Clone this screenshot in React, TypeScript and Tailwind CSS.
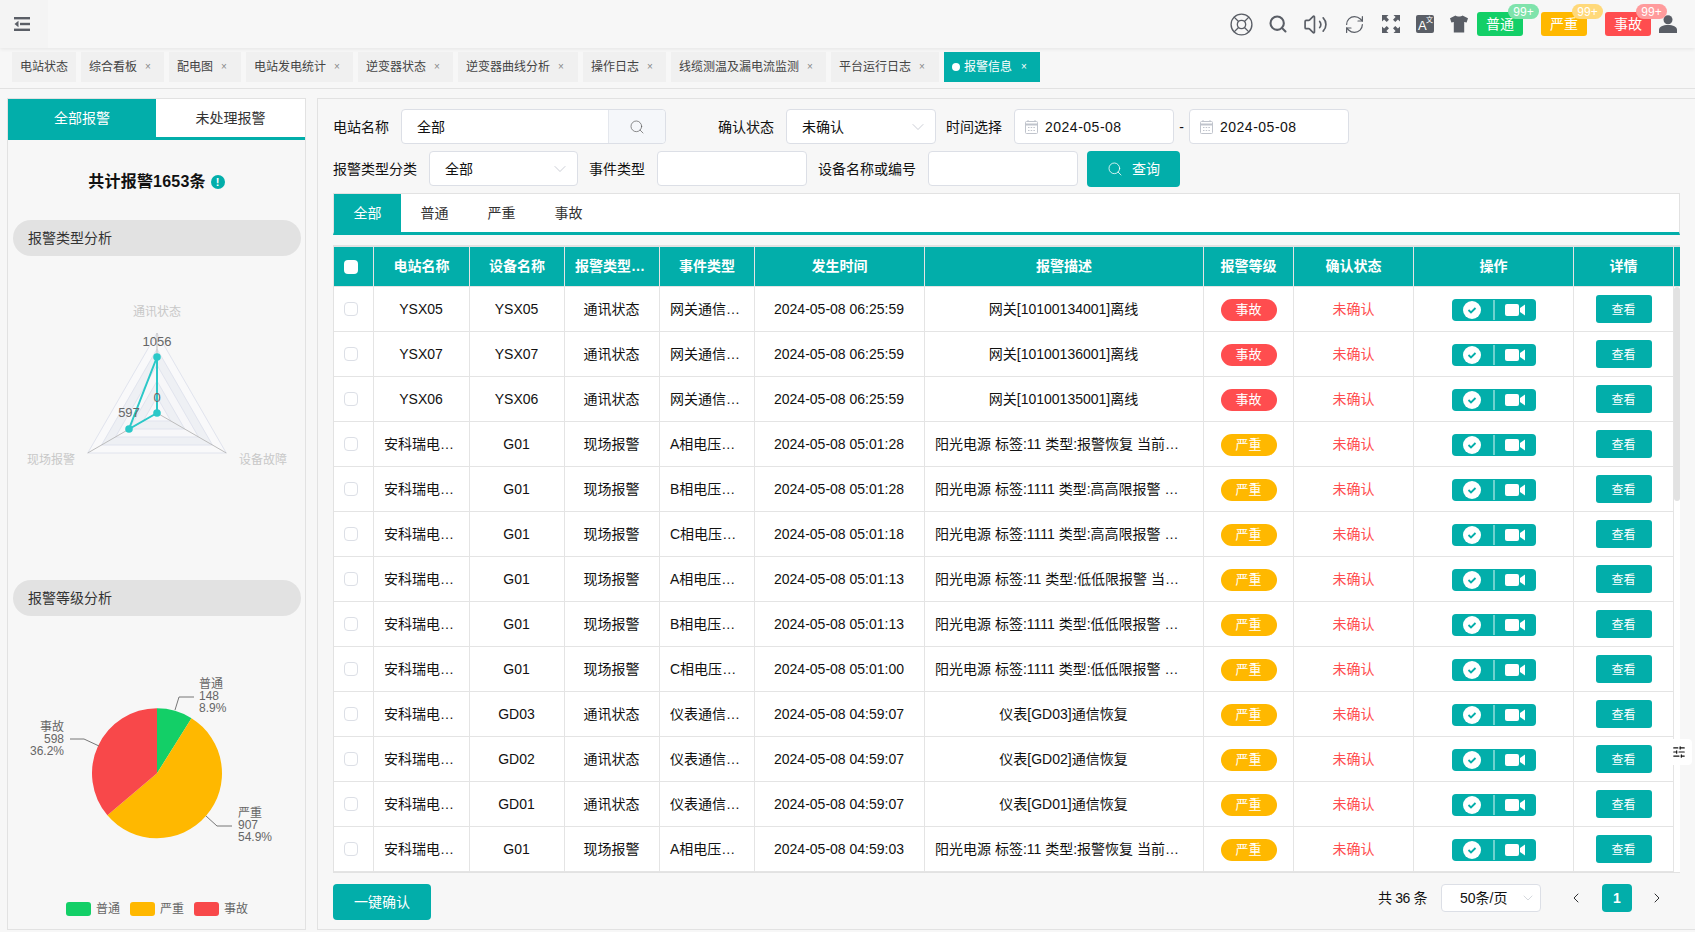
import { LifeBuoy, Search, Volume2, RefreshCw, ChevronDown, ChevronLeft, ChevronRight, SlidersHorizontal } from 'lucide-react';

const pageTabs = [
  { label: '电站状态', w: 'w-[64px]', close: false },
  { label: '综合看板', w: 'w-[83px]', close: true },
  { label: '配电图', w: 'w-[72px]', close: true },
  { label: '电站发电统计', w: 'w-[107px]', close: true },
  { label: '逆变器状态', w: 'w-[95px]', close: true },
  { label: '逆变器曲线分析', w: 'w-[120px]', close: true },
  { label: '操作日志', w: 'w-[83px]', close: true },
  { label: '线缆测温及漏电流监测', w: 'w-[155px]', close: true },
  { label: '平台运行日志', w: 'w-[108px]', close: true },
];

const rows = [
  ['YSX05', 'YSX05', '通讯状态', '网关通信中断', '2024-05-08 06:25:59', '网关[10100134001]离线', '事故'],
  ['YSX07', 'YSX07', '通讯状态', '网关通信中断', '2024-05-08 06:25:59', '网关[10100136001]离线', '事故'],
  ['YSX06', 'YSX06', '通讯状态', '网关通信中断', '2024-05-08 06:25:59', '网关[10100135001]离线', '事故'],
  ['安科瑞电气股份', 'G01', '现场报警', 'A相电压越限', '2024-05-08 05:01:28', '阳光电源 标签:11 类型:报警恢复 当前值:230.5', '严重'],
  ['安科瑞电气股份', 'G01', '现场报警', 'B相电压越限', '2024-05-08 05:01:28', '阳光电源 标签:1111 类型:高高限报警 当前值:265', '严重'],
  ['安科瑞电气股份', 'G01', '现场报警', 'C相电压越限', '2024-05-08 05:01:18', '阳光电源 标签:1111 类型:高高限报警 当前值:265', '严重'],
  ['安科瑞电气股份', 'G01', '现场报警', 'A相电压越限', '2024-05-08 05:01:13', '阳光电源 标签:11 类型:低低限报警 当前值:180', '严重'],
  ['安科瑞电气股份', 'G01', '现场报警', 'B相电压越限', '2024-05-08 05:01:13', '阳光电源 标签:1111 类型:低低限报警 当前值:180', '严重'],
  ['安科瑞电气股份', 'G01', '现场报警', 'C相电压越限', '2024-05-08 05:01:00', '阳光电源 标签:1111 类型:低低限报警 当前值:180', '严重'],
  ['安科瑞电气股份', 'GD03', '通讯状态', '仪表通信中断', '2024-05-08 04:59:07', '仪表[GD03]通信恢复', '严重'],
  ['安科瑞电气股份', 'GD02', '通讯状态', '仪表通信中断', '2024-05-08 04:59:07', '仪表[GD02]通信恢复', '严重'],
  ['安科瑞电气股份', 'GD01', '通讯状态', '仪表通信中断', '2024-05-08 04:59:07', '仪表[GD01]通信恢复', '严重'],
  ['安科瑞电气股份', 'G01', '现场报警', 'A相电压越限', '2024-05-08 04:59:03', '阳光电源 标签:11 类型:报警恢复 当前值:230.5', '严重'],
];

const headers = ['电站名称', '设备名称', '报警类型分类', '事件类型', '发生时间', '报警描述', '报警等级', '确认状态', '操作', '详情'];

function FoldIcon() {
  return (
    <svg width="16" height="14" viewBox="0 0 16 14" fill="#5a5e66">
      <rect x="0" y="0" width="16" height="2.4" />
      <rect x="6" y="5.8" width="10" height="2.4" />
      <rect x="0" y="11.6" width="16" height="2.4" />
      <path d="M4.5 3.8 L0.5 7 L4.5 10.2 Z" />
    </svg>
  );
}

function FullscreenIcon() {
  return (
    <svg width="18" height="18" viewBox="0 0 18 18" fill="#5a5e66">
      <path d="M0 0h6.5L4.4 2.1 7 4.7 4.7 7 2.1 4.4 0 6.5z" />
      <path d="M18 0v6.5l-2.1-2.1L13.3 7 11 4.7l2.6-2.6L11.500 0z" />
      <path d="M0 18v-6.500l2.100 2.100L4.700 11 7 13.300l-2.600 2.600 2.100 2.100z" />
      <path d="M18 18h-6.500l2.100-2.100L11 13.300 13.300 11l2.600 2.600 2.100-2.100z" />
    </svg>
  );
}

function TranslateIcon() {
  return (
    <div className="relative h-[18px] w-[18px] rounded-[2px] bg-[#5a5e66] text-white">
      <span className="absolute bottom-[1px] left-[2px] text-[13px] leading-none">A</span>
      <span className="absolute right-[1px] top-[1px] text-[7px] leading-none">文</span>
    </div>
  );
}

function ShirtIcon() {
  return (
    <svg width="18" height="18" viewBox="0 0 18 18" fill="#5a5e66">
      <path d="M5.500 0.500 C7 1.800 11 1.800 12.500 0.500 L18 3.200 L16.600 7.600 L14.200 7 L14.200 17.500 L3.800 17.500 L3.800 7 L1.400 7.600 L0 3.200 Z" />
    </svg>
  );
}

function UserIcon() {
  return (
    <svg width="18" height="18" viewBox="0 0 18 18" fill="#5a5e66">
      <circle cx="9" cy="4.800" r="4.500" />
      <path d="M0 18 V15 C0 11.500 4 10 9 10 C14 10 18 11.500 18 15 V18 Z" />
    </svg>
  );
}

function CheckIcon() {
  return (
    <svg width="18" height="18" viewBox="0 0 18 18">
      <circle cx="9" cy="9" r="9" fill="#fff" />
      <path d="M5.500 9 L8 11.500 L12.500 7" fill="none" stroke="#02aeaa" strokeWidth="1.800" />
    </svg>
  );
}

function CameraIcon() {
  return (
    <svg width="20" height="12" viewBox="0 0 20 12" fill="#fff">
      <rect x="0" y="0" width="14" height="12" rx="2" />
      <path d="M15 4 L20 0.500 V11.500 L15 8 Z" />
    </svg>
  );
}

function CalendarIcon() {
  return (
    <svg width="13" height="14" viewBox="0 0 13 14" fill="none" stroke="#c0c4cc" strokeWidth="1">
      <rect x="0.500" y="1.500" width="12" height="12" rx="1" />
      <path d="M0.500 4.500H12.500" strokeWidth="2" />
      <path d="M3 0V2M10 0V2" />
      <path d="M3 7.500H10M3 10.500H10" strokeDasharray="1.500 1.200" />
    </svg>
  );
}

function AlarmBadge({ label, color, soft }: { label: string; color: string; soft: string }) {
  return (
    <div className={`relative flex h-6 w-[46px] items-center justify-center rounded-[3px] text-sm text-white ${color}`}>
      {label}
      <span className={`absolute left-[31px] top-[-8px] flex h-[15px] w-[31px] items-center justify-center rounded-full text-xs text-white ${soft}`}>
        99+
      </span>
    </div>
  );
}

function RadarChart() {
  const cx = 157;
  const cy = 413;
  const ring = (r: number) =>
    `${cx},${cy - r} ${cx + r * 0.866},${cy + r / 2} ${cx - r * 0.866},${cy + r / 2}`;
  const fills = ['#f9f9fa', '#eef0f4', '#f7f7f9', '#eef0f4', '#f7f7f9'];
  return (
    <svg width="297" height="324" viewBox="8 256 297 324" className="block shrink-0">
      {[80, 64, 48, 32, 16].map((r, i) => (
        <polygon key={r} points={ring(r)} fill={fills[i]} stroke="#e1e4ee" strokeWidth="1" />
      ))}
      <path d="M157 413V333M157 413L87.700 453M157 413L226.300 453" stroke="#bdbdbd" strokeWidth="1" />
      <polygon points="157,357 129,429 157,413" fill="none" stroke="#2bc8c8" strokeWidth="2" />
      <circle cx="157" cy="357" r="3.800" fill="#2bc8c8" />
      <circle cx="129" cy="429" r="3.800" fill="#2bc8c8" />
      <circle cx="157" cy="413" r="3.800" fill="#2bc8c8" />
      <g fontSize="12" fill="#c8c8c8" textAnchor="middle">
        <text x="157" y="316">通讯状态</text>
        <text x="51" y="464">现场报警</text>
        <text x="263" y="464">设备故障</text>
      </g>
      <g fontSize="13" fill="#666" textAnchor="middle">
        <text x="157" y="346">1056</text>
        <text x="129" y="417">597</text>
        <text x="157" y="402">0</text>
      </g>
    </svg>
  );
}

function PieChart() {
  return (
    <svg width="297" height="314" viewBox="8 616 297 314" className="block shrink-0">
      <path d="M157 773.300L157 708.300A65 65 0 0 1 191.500 718.200Z" fill="#13cf67" />
      <path d="M157 773.300L191.500 718.200A65 65 0 1 1 107.400 815.300Z" fill="#ffb800" />
      <path d="M157 773.300L107.400 815.300A65 65 0 0 1 157 708.300Z" fill="#f8484a" />
      <g fill="none" stroke="#777" strokeWidth="1">
        <path d="M175 710L179 697H194" />
        <path d="M206 816L217 826H232" />
        <path d="M99 746L84 739H70" />
      </g>
      <g fontSize="12" fill="#666">
        <text x="199" y="688">普通</text>
        <text x="199" y="700">148</text>
        <text x="199" y="712">8.9%</text>
        <text x="238" y="817">严重</text>
        <text x="238" y="829">907</text>
        <text x="238" y="841">54.9%</text>
      </g>
      <g fontSize="12" fill="#666" textAnchor="end">
        <text x="64" y="731">事故</text>
        <text x="64" y="743">598</text>
        <text x="64" y="755">36.2%</text>
      </g>
      <rect x="66" y="902" width="25" height="14" rx="3" fill="#13cf67" />
      <rect x="130" y="902" width="25" height="14" rx="3" fill="#ffb800" />
      <rect x="194" y="902" width="25" height="14" rx="3" fill="#f8484a" />
      <g fontSize="12" fill="#666">
        <text x="96" y="913">普通</text>
        <text x="160" y="913">严重</text>
        <text x="224" y="913">事故</text>
      </g>
    </svg>
  );
}

function SelectBox({ value, w }: { value: string; w: string }) {
  return (
    <div className={`flex h-[35px] items-center justify-between rounded border border-[#dcdfe6] bg-white pl-[15px] pr-[7px] text-sm text-[#111] ${w}`}>
      {value}
      <ChevronDown size={20} strokeWidth={1} className="text-[#c0c4cc]" />
    </div>
  );
}

function DateBox() {
  return (
    <div className="flex h-[35px] w-[160px] items-center gap-[7px] rounded border border-[#dcdfe6] bg-white pl-[10px] text-sm tracking-[0.5px] text-[#111]">
      <CalendarIcon />
      2024-05-08
    </div>
  );
}

export default function App() {
  return (
    <div className="relative flex h-[932px] w-[1695px] flex-col overflow-hidden bg-[#f7f7f7] font-['Liberation_Sans','Noto_Sans_CJK_SC',sans-serif]">
      <header className="flex h-12 shrink-0 items-center shadow-[0_1px_4px_rgba(0,0,0,0.08)]">
        <div className="flex h-12 w-12 items-center justify-center bg-[#f4f4f4] pr-[4px]">
          <FoldIcon />
        </div>
        <div className="ml-auto flex items-center pr-[18px]">
          <div className="flex w-[38px] justify-center"><LifeBuoy size={25} strokeWidth={1.3} className="text-[#5a5e66]" /></div>
          <div className="flex w-[36px] justify-center"><Search size={20} strokeWidth={2.5} className="text-[#5a5e66]" /></div>
          <div className="flex w-[38px] justify-center"><Volume2 size={25} strokeWidth={1.6} className="text-[#5a5e66]" /></div>
          <div className="flex w-[40px] justify-center"><RefreshCw size={21} strokeWidth={1.4} className="text-[#5a5e66]" /></div>
          <div className="flex w-[34px] justify-center"><FullscreenIcon /></div>
          <div className="flex w-[34px] justify-center"><TranslateIcon /></div>
          <div className="mr-px flex w-[34px] justify-center"><ShirtIcon /></div>
          <AlarmBadge label="普通" color="bg-[#13cf67]" soft="bg-[#7fe3ab]" />
          <div className="ml-[18px]"><AlarmBadge label="严重" color="bg-[#ffb800]" soft="bg-[#ffd97a]" /></div>
          <div className="ml-[18px]"><AlarmBadge label="事故" color="bg-[#ff4d4f]" soft="bg-[#ff9b9c]" /></div>
          <div className="ml-2"><UserIcon /></div>
        </div>
      </header>

      <nav className="flex h-[41px] shrink-0 gap-[5px] border-b border-[#e2e2e2] pl-3 pt-1">
        {pageTabs.map((t) => (
          <div key={t.label} className={`flex h-[30px] items-center bg-[#f0f0f0] pl-[8px] text-xs text-[#444] ${t.w}`}>
            {t.label}
            {t.close && <span className="ml-[8px] text-[10px] text-[#888]">×</span>}
          </div>
        ))}
        <div className="flex h-[30px] w-[96px] items-center bg-[#02aeaa] pl-[8px] text-xs text-white">
          <span className="mr-[4px] h-[8px] w-[8px] rounded-full bg-white" />
          报警信息
          <span className="ml-[9px] text-[10px]">×</span>
        </div>
      </nav>

      <main className="flex min-h-0 flex-1 pb-[2px] pl-[7px] pt-[9px]">
        <aside className="flex w-[299px] shrink-0 flex-col border border-[#e2e2e2]">
          <div className="flex h-[41px] shrink-0 border-b-[3px] border-[#02aeaa] bg-white text-sm">
            <div className="flex w-[148px] items-center justify-center bg-[#02aeaa] text-white">全部报警</div>
            <div className="flex flex-1 items-center justify-center text-[#333]">未处理报警</div>
          </div>
          <div className="flex h-[80px] shrink-0 items-center justify-center gap-[5px] pt-[4px] text-base font-bold tracking-[0.2px] text-[#111]">
            共计报警1653条
            <span className="flex h-[14px] w-[14px] items-center justify-center rounded-full bg-[#02aeaa] text-[11px] text-white">!</span>
          </div>
          <div className="ml-[5px] mr-1 flex h-9 shrink-0 items-center rounded-full bg-[#e2e2e2] pl-[15px] text-sm text-[#333]">报警类型分析</div>
          <RadarChart />
          <div className="ml-[5px] mr-1 flex h-9 shrink-0 items-center rounded-full bg-[#e2e2e2] pl-[15px] text-sm text-[#333]">报警等级分析</div>
          <PieChart />
        </aside>

        <section className="ml-[11px] flex min-w-0 flex-1 flex-col border-b border-l border-t border-[#e2e2e2] pl-[15px] pt-[10px]">
          <div className="flex h-[35px] items-center text-sm text-[#111]">
            <span className="w-[68px]">电站名称</span>
            <div className="flex h-[35px] w-[265px] rounded border border-[#dcdfe6] bg-white">
              <div className="flex flex-1 items-center pl-[15px]">全部</div>
              <div className="flex w-[57px] items-center justify-center rounded-r border-l border-[#e4e7ed] bg-[#f5f7fa]">
                <Search size={16} strokeWidth={1} className="text-[#555]" />
              </div>
            </div>
            <span className="ml-[52px] w-[68px]">确认状态</span>
            <SelectBox value="未确认" w="w-[150px]" />
            <span className="ml-[10px] w-[68px]">时间选择</span>
            <DateBox />
            <span className="w-[15px] text-center">-</span>
            <DateBox />
          </div>
          <div className="mt-[7px] flex h-[35px] items-center text-sm text-[#111]">
            <span className="w-[96px]">报警类型分类</span>
            <SelectBox value="全部" w="w-[149px]" />
            <span className="ml-[11px] w-[68px]">事件类型</span>
            <div className="h-[35px] w-[150px] rounded border border-[#dcdfe6] bg-white" />
            <span className="ml-[11px] w-[110px]">设备名称或编号</span>
            <div className="h-[35px] w-[150px] rounded border border-[#dcdfe6] bg-white" />
            <button className="ml-[9px] flex h-9 w-[93px] items-center justify-center gap-[9px] rounded bg-[#02aeaa] text-sm text-white">
              <Search size={16} strokeWidth={1.2} />
              查询
            </button>
          </div>

          <div className="mt-[7px] flex h-[42px] w-[1347px] shrink-0 border border-b-[3px] border-[#e2e2e2] border-b-[#02aeaa] bg-white text-sm text-[#333]">
            <div className="flex w-[67px] items-center justify-center bg-[#02aeaa] text-white">全部</div>
            <div className="flex w-[67px] items-center justify-center">普通</div>
            <div className="flex w-[67px] items-center justify-center">严重</div>
            <div className="flex w-[67px] items-center justify-center">事故</div>
          </div>

          <div className="mt-[10px] flex h-[628px] w-[1347px] shrink-0 overflow-hidden border-b border-l border-t-2 border-[#e2e2e2] bg-white">
            <table className="w-[1340px] shrink-0 table-fixed border-separate border-spacing-0 self-start text-sm text-[#111]">
              <colgroup>
                <col className="w-[40px]" />
                <col className="w-[96px]" />
                <col className="w-[95px]" />
                <col className="w-[95px]" />
                <col className="w-[95px]" />
                <col className="w-[170px]" />
                <col className="w-[279px]" />
                <col className="w-[90px]" />
                <col className="w-[120px]" />
                <col className="w-[160px]" />
                <col className="w-[100px]" />
              </colgroup>
              <thead>
                <tr className="h-[40px] bg-[#02aeaa] text-white">
                  <th className="border-b border-r border-[#e4e4e4] p-0">
                    <span className="mr-[6px] inline-block h-[14px] w-[14px] -translate-y-px rounded-sm bg-white align-middle" />
                  </th>
                  {headers.map((h) => (
                    <th key={h} className="truncate border-b border-r border-[#e4e4e4] px-[10px] pb-[2px] font-bold">{h}</th>
                  ))}
                </tr>
              </thead>
              <tbody>
                {rows.map((r, i) => (
                  <tr key={i} className="h-[45px]">
                    <td className="border-b border-r border-[#e4e4e4] p-0 text-center">
                      <span className="mr-[6px] inline-block h-[14px] w-[14px] -translate-y-px rounded-sm border border-[#dcdfe6] bg-white align-middle" />
                    </td>
                    {r.slice(0, 6).map((c, j) => (
                      <td key={j} className="truncate border-b border-r border-[#e4e4e4] pl-[10px] pr-[11px] text-center">{c}</td>
                    ))}
                    <td className="border-b border-r border-[#e4e4e4] text-center">
                      <span className={`inline-flex h-[22px] w-14 translate-y-px items-center justify-center rounded-full align-middle text-[13px] text-white ${r[6] === '事故' ? 'bg-[#ff4d4f]' : 'bg-[#ffb800]'}`}>{r[6]}</span>
                    </td>
                    <td className="border-b border-r border-[#e4e4e4] text-center text-[#ff4d4f]">未确认</td>
                    <td className="border-b border-r border-[#e4e4e4] text-center">
                      <div className="mx-auto flex h-[22px] w-[84px] translate-y-px items-center rounded-[4px] bg-[#02aeaa]">
                        <div className="flex h-[20px] w-[43px] items-center justify-center border-r-2 border-[#6fd2cf]"><CheckIcon /></div>
                        <div className="flex flex-1 items-center justify-center"><CameraIcon /></div>
                      </div>
                    </td>
                    <td className="border-b border-r border-[#e4e4e4] text-center">
                      <button className="h-7 w-14 rounded-[3px] bg-[#02aeaa] pt-px align-middle text-xs text-white">查看</button>
                    </td>
                  </tr>
                ))}
              </tbody>
            </table>
            <div className="flex w-[6px] flex-col">
              <div className="h-[40px] shrink-0 border-b border-[#e4e4e4] bg-[#02aeaa]" />
              <div className="h-[214px] shrink-0 rounded-sm bg-[#e2e2e2]" />
            </div>
          </div>

          <div className="mt-[11px] flex w-[1347px] items-start">
            <button className="h-9 w-[98px] rounded bg-[#02aeaa] text-sm text-white">一键确认</button>
            <div className="ml-auto flex h-7 items-center pr-[15px] text-sm text-[#111]">
              <span className="tracking-[-0.4px]">共 36 条</span>
              <div className="ml-[14px] flex h-7 w-[100px] items-center justify-between rounded border border-[#dcdfe6] bg-white pl-[18px] pr-[4px]">
                50条/页
                <ChevronDown size={16} strokeWidth={1} className="text-[#c0c4cc]" />
              </div>
              <ChevronLeft size={16} strokeWidth={1.5} className="ml-[27px] text-[#303133]" />
              <div className="ml-[18px] flex h-7 w-[30px] items-center justify-center rounded-sm bg-[#02aeaa] font-bold text-white">1</div>
              <ChevronRight size={16} strokeWidth={1.5} className="ml-[17px] text-[#303133]" />
            </div>
          </div>
        </section>
      </main>

      <div className="absolute left-[1672px] top-[739px] flex h-[26px] w-[20px] items-center rounded-r-[4px] bg-white">
        <SlidersHorizontal size={14} strokeWidth={2} className="text-[#111]" />
      </div>
    </div>
  );
}
